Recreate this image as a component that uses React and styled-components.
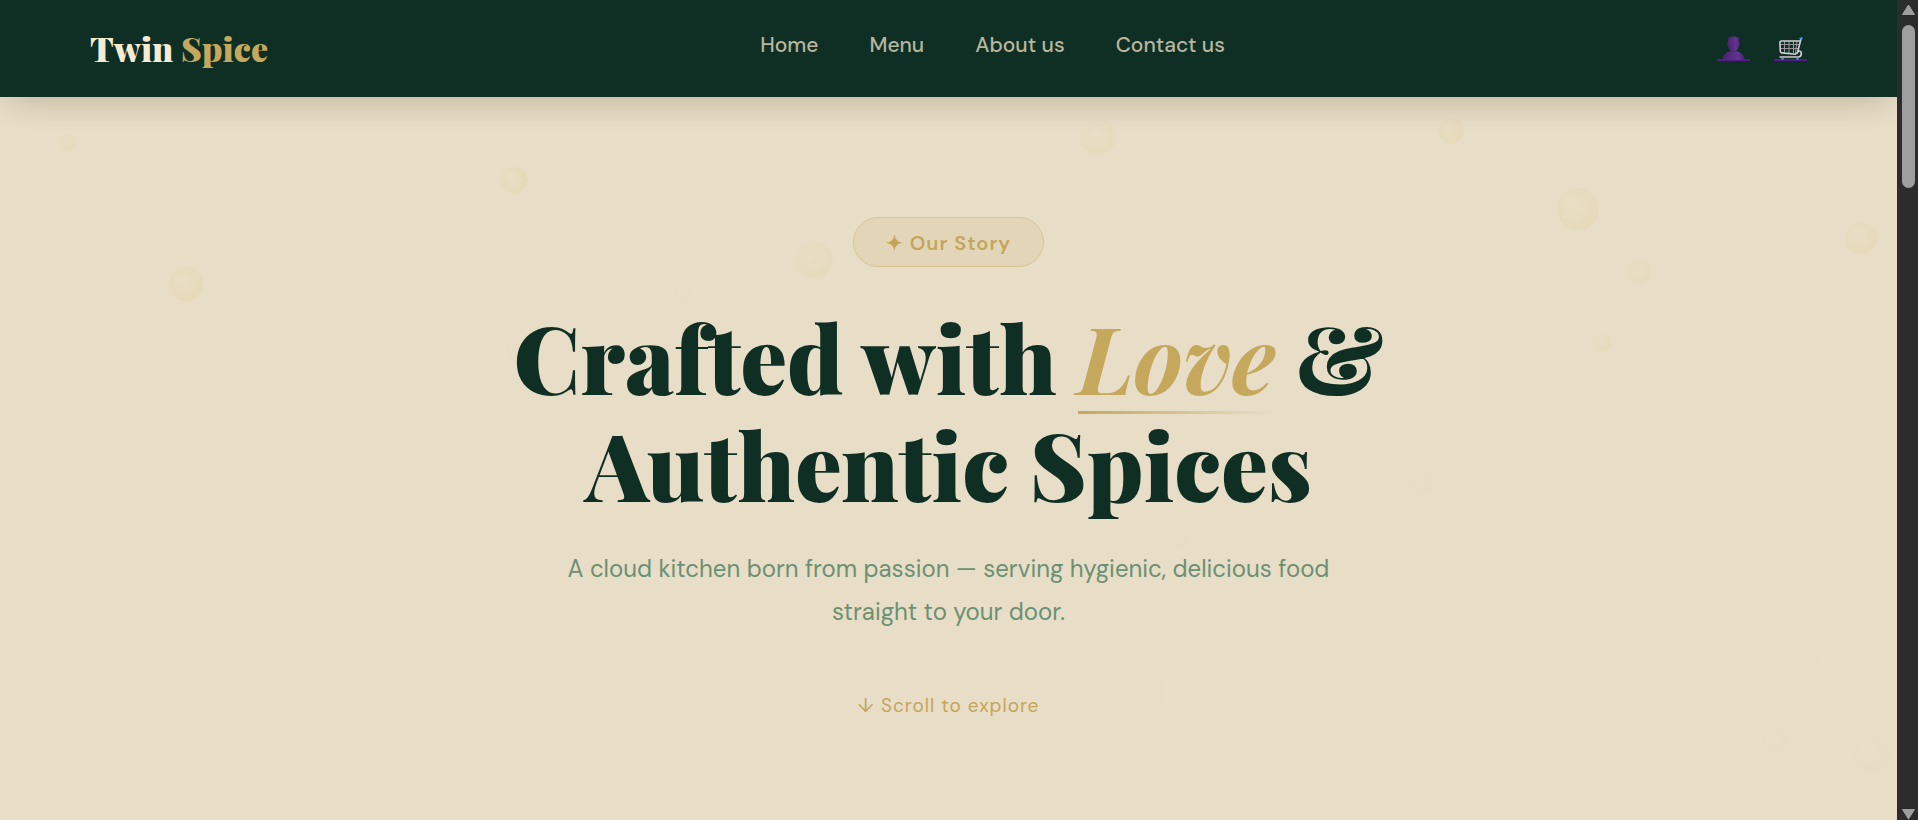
import React from "react";
import styled, { createGlobalStyle } from "styled-components";

const bubbles = [
  { x: 3.6, y: 46, size: 17, o: 0.7 },
  { x: 27.1, y: 83, size: 27, o: 0.9 },
  { x: 9.8, y: 187, size: 34, o: 0.9 },
  { x: 42.9, y: 163, size: 37, o: 0.6 },
  { x: 57.9, y: 40, size: 36, o: 0.6 },
  { x: 76.5, y: 34, size: 25, o: 0.9 },
  { x: 83.2, y: 112, size: 42, o: 0.9 },
  { x: 98.1, y: 141, size: 32, o: 0.8 },
  { x: 86.4, y: 175, size: 23, o: 0.6 },
  { x: 84.5, y: 246, size: 17, o: 0.7 },
  { x: 36, y: 198, size: 17, o: 0.2 },
  { x: 27.4, y: 252, size: 26, o: 0.2 },
  { x: 74.9, y: 385, size: 24, o: 0.2 },
  { x: 62.2, y: 442, size: 20, o: 0.2 },
  { x: 60.6, y: 593, size: 32, o: 0.1 },
  { x: 95.3, y: 553, size: 34, o: 0.1 },
  { x: 93.6, y: 643, size: 26, o: 0.2 },
  { x: 98.7, y: 658, size: 36, o: 0.2 },
];

const App = () => {
  return (
    <>
      <GlobalStyle />
      <Screen>
        <Page>
          <Navbar>
            <Logo href="#home">
              Twin <span>Spice</span>
            </Logo>
            <NavLinks>
              <a href="#home">Home</a>
              <a href="#menu">Menu</a>
              <a href="#about">About us</a>
              <a href="#contact">Contact us</a>
            </NavLinks>
            <NavIcons>
              <IconLink href="#account" aria-label="Account">
                <UserIcon />
              </IconLink>
              <IconLink href="#cart" aria-label="Cart">
                <CartIcon />
              </IconLink>
            </NavIcons>
          </Navbar>
          <Hero>
            {bubbles.map((b, i) => (
              <Bubble
                key={i}
                style={{
                  left: `${b.x}%`,
                  top: b.y,
                  width: b.size,
                  height: b.size,
                  opacity: b.o,
                }}
              />
            ))}
            <Badge>✦ Our Story</Badge>
            <Title>
              Crafted with <em>Love</em> &amp;
              <br />
              Authentic Spices
            </Title>
            <Text>
              A cloud kitchen born from passion — serving hygienic, delicious
              food straight to your door.
            </Text>
            <ScrollHint>↓ Scroll to explore</ScrollHint>
          </Hero>
        </Page>
        <Scrollbar aria-hidden="true">
          <svg width="15" height="12" viewBox="0 0 15 12">
            <path d="M7.5 1 L13.5 10.5 H1.5 Z" />
          </svg>
          <Thumb />
          <svg width="15" height="12" viewBox="0 0 15 12">
            <path d="M7.5 11 L13.5 1.5 H1.5 Z" />
          </svg>
        </Scrollbar>
      </Screen>
    </>
  );
};

export default App;

const UserIcon = () => (
  <svg width="33" height="24" viewBox="0 0 33 24">
    <defs>
      <linearGradient id="userFill" x1="0" x2="1">
        <stop offset="0" stopColor="#492273" />
        <stop offset="0.7" stopColor="#60358f" />
        <stop offset="1" stopColor="#4c2279" />
      </linearGradient>
    </defs>
    <path
      fill="url(#userFill)"
      d="M5.5 24 C6 18.5 10 15.6 14 15.3 L19 15.3 C23 15.6 27 18.5 27.5 24 Z"
    />
    <path
      fill="url(#userFill)"
      d="M11 3.5 C11 1.5 13 0.6 16.5 0.6 C20 0.6 22.2 1.5 22.2 3.5 L22.2 7 C23.4 7 23.2 9.8 22 10 C21.5 13 19.5 15.6 16.5 15.6 C13.5 15.6 11.6 13 11.2 10 C10 9.8 9.8 7 11 7 Z"
    />
  </svg>
);

const CartIcon = () => (
  <svg width="33" height="24" viewBox="0 0 33 24" fill="none">
    <path
      stroke="#98949a"
      strokeWidth="1"
      d="M6 8.5 H25 M6 12.5 H24 M10.5 5 V16 M15 5 V17 M19.5 5 V17 M23 5 L21.5 17"
    />
    <path
      stroke="#d2cdd0"
      strokeWidth="1.6"
      strokeLinejoin="round"
      d="M26 5 H7.5 Q5.8 5 5.9 6.8 L6.3 15.3 Q6.4 16.8 8 16.9 L22 18.2 M27 3 L23.2 17.6 M22 17.8 C24 16 24 14.7 25.5 15 C28.2 15.6 28 20.7 24.5 21 H5.5"
    />
    <path stroke="#4a90d9" strokeWidth="1.9" d="M25.5 2.6 L28.6 1.8" />
    <circle cx="8.5" cy="22.7" r="1.3" fill="#4a90d9" />
    <circle cx="23.5" cy="22.7" r="1.3" fill="#4a90d9" />
  </svg>
);

const GlobalStyle = createGlobalStyle`
  * {
    box-sizing: border-box;
  }
  body {
    margin: 0;
    background: #e8ddc6;
    font-family: "DM Sans", "Inter", "Liberation Sans", sans-serif;
  }
`;

const Screen = styled.div`
  display: flex;
  height: 100vh;
  overflow: hidden;
`;

const Page = styled.div`
  flex: 1;
  display: flex;
  flex-direction: column;
  min-width: 0;
  overflow: hidden;
`;

const Navbar = styled.nav`
  position: relative;
  z-index: 1;
  flex-shrink: 0;
  display: flex;
  justify-content: space-between;
  align-items: center;
  height: 97px;
  padding: 0 90px;
  background: #0f2e24;
  box-shadow: 0 10px 34px -10px rgba(20, 15, 10, 0.24);
`;

const Logo = styled.a`
  padding-bottom: 2px;
  font-family: "Playfair Display", "Liberation Serif", serif;
  font-weight: 900;
  font-size: 34px;
  color: #f5ead2;
  text-decoration: none;
  span {
    color: #c5a85c;
  }
`;

const NavLinks = styled.div`
  display: flex;
  gap: 51px;
  padding-bottom: 8px;
  a {
    font-weight: 500;
    font-size: 21px;
    line-height: 28px;
    color: #b7b69e;
    text-decoration: none;
  }
`;

const NavIcons = styled.div`
  display: flex;
  gap: 24px;
`;

const IconLink = styled.a`
  display: block;
  border-bottom: 2px solid #551a8b;
  svg {
    position: relative;
    display: block;
    margin-bottom: -1px;
  }
`;

const Hero = styled.section`
  position: relative;
  flex: 1;
  display: flex;
  flex-direction: column;
  align-items: center;
  padding: 120px 20px;
  text-align: center;
  overflow: hidden;
`;

const Bubble = styled.i`
  position: absolute;
  border-radius: 50%;
  transform: translate(-50%, -50%);
  background: radial-gradient(
    circle at 40% 40%,
    rgba(234, 224, 198, 0.5),
    rgba(226, 206, 150, 0.42)
  );
`;

const Badge = styled.span`
  position: relative;
  padding: 12px 32px 10px;
  border: 1px solid #d8c591;
  border-radius: 25px;
  background: #e3d6b8;
  font-weight: 600;
  font-size: 20px;
  line-height: 26px;
  letter-spacing: 1px;
  color: #c5a55a;
`;

const Title = styled.h1`
  position: relative;
  margin: 36px 0 30px;
  font-family: "Playfair Display", "Liberation Serif", serif;
  font-weight: 900;
  font-size: 93px;
  line-height: 107px;
  color: #0f2e24;
  em {
    position: relative;
    display: inline-block;
    font-weight: 700;
    color: #c5a85c;
  }
  em::after {
    content: "";
    position: absolute;
    left: 0;
    bottom: -4px;
    width: 100%;
    height: 3px;
    background: linear-gradient(90deg, #c5a85c, transparent);
  }
`;

const Text = styled.p`
  position: relative;
  max-width: 800px;
  margin: 0 0 60px;
  font-size: 24px;
  line-height: 43px;
  color: #6b9173;
`;

const ScrollHint = styled.span`
  position: relative;
  font-size: 19px;
  line-height: 26px;
  letter-spacing: 1px;
  color: #c5a55a;
`;

const Scrollbar = styled.div`
  flex-shrink: 0;
  display: flex;
  flex-direction: column;
  align-items: center;
  width: 21px;
  padding: 4px 0 0 2px;
  background: #2c2c2c;
  svg {
    fill: #9f9f9f;
    stroke: #9f9f9f;
    stroke-width: 1;
    stroke-linejoin: round;
  }
  svg:last-child {
    margin-top: auto;
  }
`;

const Thumb = styled.div`
  width: 13px;
  height: 20%;
  margin-top: 9px;
  border-radius: 7px;
  background: #9f9f9f;
`;
